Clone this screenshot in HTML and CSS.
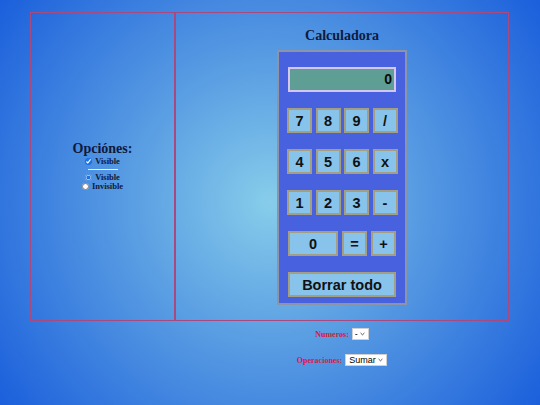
FILE: index.html
```html
<!DOCTYPE html>
<html lang="es">
<head>
<meta charset="utf-8">
<title>Calculadora</title>
<link rel="stylesheet" href="styles.css">
</head>
<body>
<div class="page">
  <div class="frame">
    <div class="cell-left">
      <h2 class="opts-title">Opciónes:</h2>
      <label class="opt opt-check"><input type="checkbox" checked> Visible</label>
      <hr class="sep">
      <label class="opt"><input type="radio" name="vis" checked> Visible</label>
      <label class="opt"><input type="radio" name="vis"> Invisible</label>
    </div>
    <div class="cell-right">
      <h1 class="calc-title">Calculadora</h1>
      <div class="calc">
        <div class="display">0</div>
        <div class="row row4">
          <button class="key">7</button><button class="key">8</button><button class="key">9</button><button class="key">/</button>
        </div>
        <div class="row row4">
          <button class="key">4</button><button class="key">5</button><button class="key">6</button><button class="key">x</button>
        </div>
        <div class="row row4">
          <button class="key">1</button><button class="key">2</button><button class="key">3</button><button class="key">-</button>
        </div>
        <div class="row row-last">
          <button class="key">0</button><button class="key">=</button><button class="key">+</button>
        </div>
        <button class="key clear">Borrar todo</button>
      </div>
    </div>
  </div>
  <div class="below">
    <div class="spacer"></div>
    <div class="controls">
      <div class="ctrl"><span class="lbl">Numeros:</span><select class="sel sel-num"><option>-</option></select></div>
      <div class="ctrl"><span class="lbl">Operaciones:</span><select class="sel sel-op"><option>Sumar</option></select></div>
    </div>
  </div>
</div>
</body>
</html>
```

FILE: styles.css
```css
html, body {
  margin: 0;
  height: 100%;
  overflow: hidden;
}
body {
  background: radial-gradient(circle farthest-corner at 50% 50%, #87cdea 0%, #5b9fe3 40%, #1b5fdc 100%);
  font-family: "Liberation Serif", serif;
  color: #0f1a3c;
}
.page {
  width: 479px;
  padding: 12px 0 0 30px;
}
.frame {
  display: grid;
  grid-template-columns: 145px 1fr;
  height: 309px;
  border: 1px solid #a84a80;
  box-sizing: border-box;
}
.cell-left {
  border-right: 2px solid #a84a80;
  display: flex;
  flex-direction: column;
  align-items: center;
  justify-content: center;
}
.opts-title {
  margin: 0;
  font-size: 14px;
  line-height: 14px;
  font-weight: bold;
}
.opt {
  display: flex;
  align-items: center;
  gap: 3px;
  font-size: 8.5px;
  font-weight: bold;
  line-height: 9px;
}
.opt-check {
  margin-top: 1px;
}
.opt input {
  margin: 0;
  width: 7px;
  height: 7px;
  accent-color: #1a73e8;
}
.sep {
  width: 30px;
  border: 0;
  border-top: 1px solid #e6eef8;
  margin: 3px 0 3px;
}
.cell-right {
  display: flex;
  flex-direction: column;
  align-items: center;
}
.calc-title {
  margin: 16px 0 7px;
  font-size: 14px;
  line-height: 14px;
  font-weight: bold;
}
.calc {
  width: 130px;
  box-sizing: border-box;
  background: #4862df;
  border: 2px solid #8e94a8;
  padding: 15px 9px 6px 9px;
  display: flex;
  flex-direction: column;
}
.display {
  height: 25px;
  box-sizing: border-box;
  background: #5f9e94;
  border: 2px solid #d4c6f0;
  font-family: "Liberation Sans", Arial, sans-serif;
  font-weight: bold;
  font-size: 14px;
  line-height: 21px;
  text-align: right;
  padding-right: 2px;
  color: #0a0a0a;
  margin-bottom: 16px;
}
.row {
  display: grid;
  height: 25px;
  margin-bottom: 16px;
}
.row4 {
  grid-template-columns: repeat(4, 25px);
  column-gap: 3.5px;
  margin-left: -1px;
}
.row-last {
  grid-template-columns: 50px 25px 25px;
  column-gap: 4px;
}
.key {
  margin: 0;
  padding: 0;
  box-sizing: border-box;
  height: 25px;
  background: #87c3ea;
  border: 2px solid #a49e82;
  font-family: "Liberation Sans", Arial, sans-serif;
  font-weight: bold;
  font-size: 14.5px;
  color: #111;
}
.clear {
  width: 108px;
  font-size: 14.5px;
}
.below {
  display: grid;
  grid-template-columns: 145px 1fr;
}
.controls {
  display: flex;
  flex-direction: column;
  align-items: center;
  gap: 14px;
  padding-top: 7px;
}
.ctrl {
  display: flex;
  align-items: center;
  gap: 3px;
}
.lbl {
  color: #d42040;
  font-weight: bold;
  font-size: 8px;
}
.sel {
  appearance: none;
  -webkit-appearance: none;
  font-family: "Liberation Sans", Arial, sans-serif;
  font-size: 9px;
  line-height: 10px;
  height: 12px;
  border: 1px solid #d0d0d0;
  border-radius: 0;
  background-color: #fff;
  background-image: url("data:image/svg+xml,%3Csvg xmlns='http://www.w3.org/2000/svg' width='6' height='4' viewBox='0 0 6 4'%3E%3Cpath d='M0.7 0.8 L3 3 L5.3 0.8' fill='none' stroke='%23333' stroke-width='1'/%3E%3C/svg%3E");
  background-repeat: no-repeat;
  background-position: right 3px center;
  background-size: 5px 4px;
  color: #000;
}
.sel-num {
  width: 17px;
  padding: 0 0 0 2px;
}
.sel-op {
  width: 42px;
  padding: 0 0 0 3px;
}
```
